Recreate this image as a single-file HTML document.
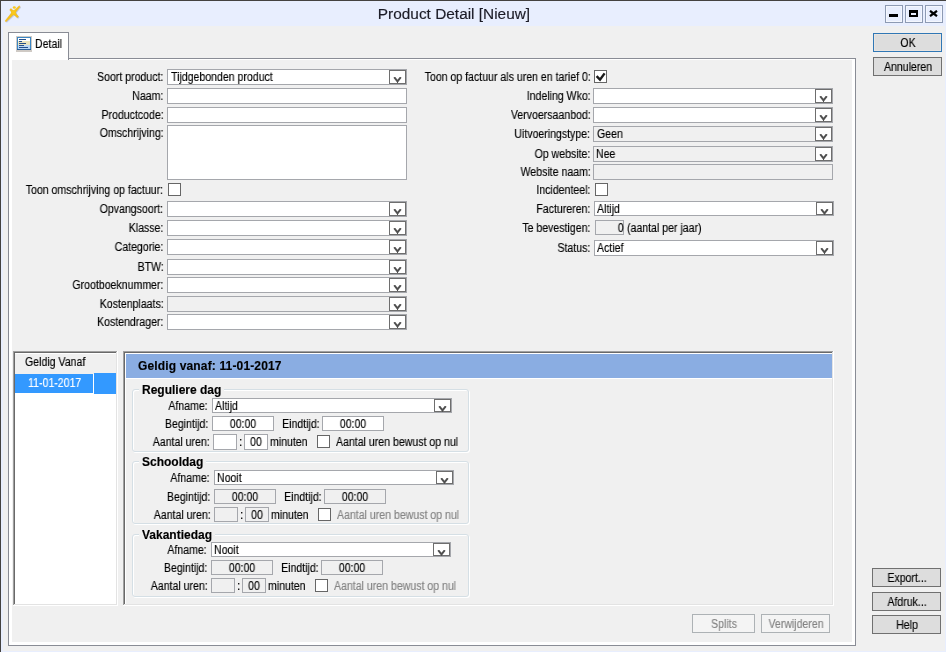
<!DOCTYPE html>
<html><head><meta charset="utf-8"><title>Product Detail</title>
<style>
html,body{margin:0;padding:0;}
body{width:946px;height:652px;overflow:hidden;position:relative;background:#f0f0f0;font-family:'Liberation Sans', sans-serif;}
body>div{position:absolute;}
.t{white-space:nowrap;font-family:'Liberation Sans', sans-serif;will-change:transform;-webkit-text-stroke:0.15px currentColor;}
</style></head><body>
<div style="left:0px;top:0px;width:946px;height:652px;background:#e8eefe"></div>
<div style="left:0px;top:0px;width:946px;height:1px;background:#444240"></div>
<div style="left:0px;top:0px;width:1px;height:652px;background:#444240"></div>
<div style="left:3px;top:26px;width:942px;height:625px;background:#f0f0f0"></div>
<svg width="24" height="24" style="position:absolute;left:0px;top:0px" viewBox="0 0 24 24">
<g fill="#7d8aa8" opacity="0.35" transform="translate(0.9,0.9)"><path d="M14.61 13.57 L20.17 6.65 L19.23 5.75 L12.59 11.63 Z M14.53 11.69 L10.95 8.57 L9.65 9.83 L12.67 13.51 Z M12.58 13.56 L17.28 17.78 L18.52 16.62 L14.62 11.64 Z M12.50 11.58 L5.02 20.96 L5.98 21.84 L14.70 13.62 Z"/><circle cx="13.6" cy="12.6" r="2.3"/></g>
<g fill="#f6c21a" stroke="#e9a90c" stroke-width="0.35" stroke-linejoin="round"><path d="M14.61 13.57 L20.17 6.65 L19.23 5.75 L12.59 11.63 Z M14.53 11.69 L10.95 8.57 L9.65 9.83 L12.67 13.51 Z M12.58 13.56 L17.28 17.78 L18.52 16.62 L14.62 11.64 Z M12.50 11.58 L5.02 20.96 L5.98 21.84 L14.70 13.62 Z"/></g>
<g fill="#f9c81e"><circle cx="13.6" cy="12.6" r="2.3"/><ellipse cx="14.3" cy="7.5" rx="1.55" ry="1.3"/></g>
</svg>
<div class="t" style="left:301px;width:306px;top:5px;text-align:center;font-size:15.4px;line-height:18px;color:#1b1b26">Product Detail [Nieuw]</div>
<div style="left:885px;top:5px;width:18px;height:18px;border:1px solid #8d9ab3;box-shadow:inset 0 0 0 1px #f4f7fe;box-sizing:border-box;background:#e8eefe"></div>
<div style="left:905px;top:5px;width:18px;height:18px;border:1px solid #8d9ab3;box-shadow:inset 0 0 0 1px #f4f7fe;box-sizing:border-box;background:#e8eefe"></div>
<div style="left:925px;top:5px;width:18px;height:18px;border:1px solid #8d9ab3;box-shadow:inset 0 0 0 1px #f4f7fe;box-sizing:border-box;background:#e8eefe"></div>
<div style="left:889px;top:14px;width:9px;height:3px;background:#000"></div>
<div style="left:909px;top:10px;width:9px;height:7px;border:2px solid #000;border-top-width:3px;border-bottom-width:2px;box-sizing:border-box"></div>
<svg width="9" height="7" style="position:absolute;left:929px;top:10px" viewBox="0 0 9 7"><path d="M1 0.8 L8 6.2 M8 0.8 L1 6.2" stroke="#000" stroke-width="2.2"/></svg>
<div style="left:8px;top:58px;width:848px;height:588px;border:1px solid #898c95;box-sizing:border-box;background:#fff"></div>
<div style="left:12px;top:60px;width:840px;height:582px;background:#f0f0f0"></div>
<div style="left:8px;top:32px;width:61px;height:28px;border:1px solid #898c95;border-bottom:none;box-sizing:border-box;background:#fff"></div>
<svg width="16" height="16" style="position:absolute;left:16px;top:36px" viewBox="0 0 16 16" shape-rendering="crispEdges">
<rect x="0" y="0" width="16" height="16" fill="#cfcac5"/>
<rect x="1" y="1" width="14" height="13" fill="#3a86c4"/>
<rect x="1" y="13" width="14" height="1" fill="#2a5e96"/>
<rect x="2" y="2" width="12" height="3" fill="#ffffff"/>
<rect x="2" y="5" width="12" height="4" fill="#e9e4c0"/>
<rect x="2" y="9" width="12" height="4" fill="#b9d7f6"/>
<rect x="3" y="3" width="7" height="1" fill="#244f8a"/>
<rect x="3" y="5" width="3" height="1" fill="#244f8a"/>
<rect x="3" y="7" width="7" height="1" fill="#244f8a"/>
<rect x="3" y="9" width="5" height="1" fill="#244f8a"/>
<rect x="3" y="11" width="9" height="1" fill="#244f8a"/>
</svg>
<div class="t" style="left:35px;top:38px;font-size:12px;line-height:13px;color:#000;transform:scaleX(0.88);transform-origin:0 0;">Detail</div>
<div class="t" style="right:782.5px;top:71px;font-size:12px;line-height:13px;color:#000;transform:scaleX(0.88);transform-origin:100% 0;text-align:right;">Soort product:</div>
<div style="left:167px;top:69px;width:240px;height:16px;background:#fff;border:1px solid #a5a7ac;box-sizing:border-box"></div>
<div style="left:389px;top:70px;width:17px;height:14px;background:#fff;border:1px solid #6e6e6e;box-sizing:border-box"></div>
<svg width="9" height="7" style="position:absolute;left:393px;top:77px" viewBox="0 0 9 7"><path d="M1.2 0.2 L4.5 4.3 L7.8 0.2" fill="none" stroke="#505050" stroke-width="2"/><path d="M4.5 4 L4.5 6" stroke="#505050" stroke-width="1"/></svg>
<div class="t" style="left:171px;top:71px;font-size:12px;line-height:13px;color:#000;transform:scaleX(0.88);transform-origin:0 0;">Tijdgebonden product</div>
<div class="t" style="right:782.5px;top:90px;font-size:12px;line-height:13px;color:#000;transform:scaleX(0.88);transform-origin:100% 0;text-align:right;">Naam:</div>
<div style="left:167px;top:88px;width:240px;height:16px;background:#fff;border:1px solid #a5a7ac;box-sizing:border-box"></div>
<div class="t" style="right:782.5px;top:109px;font-size:12px;line-height:13px;color:#000;transform:scaleX(0.88);transform-origin:100% 0;text-align:right;">Productcode:</div>
<div style="left:167px;top:107px;width:240px;height:16px;background:#fff;border:1px solid #a5a7ac;box-sizing:border-box"></div>
<div class="t" style="right:782.5px;top:127px;font-size:12px;line-height:13px;color:#000;transform:scaleX(0.88);transform-origin:100% 0;text-align:right;">Omschrijving:</div>
<div style="left:167px;top:125px;width:240px;height:55px;background:#fff;border:1px solid #a5a7ac;box-sizing:border-box"></div>
<div class="t" style="right:782.5px;top:184px;font-size:12px;line-height:13px;color:#000;transform:scaleX(0.88);transform-origin:100% 0;text-align:right;">Toon omschrijving op factuur:</div>
<div style="left:168px;top:183px;width:13px;height:13px;background:#fff;border:1px solid #666;box-sizing:border-box"></div>
<div class="t" style="right:782.5px;top:203px;font-size:12px;line-height:13px;color:#000;transform:scaleX(0.88);transform-origin:100% 0;text-align:right;">Opvangsoort:</div>
<div style="left:167px;top:201px;width:240px;height:16px;background:#fff;border:1px solid #a5a7ac;box-sizing:border-box"></div>
<div style="left:389px;top:202px;width:17px;height:14px;background:#fff;border:1px solid #6e6e6e;box-sizing:border-box"></div>
<svg width="9" height="7" style="position:absolute;left:393px;top:209px" viewBox="0 0 9 7"><path d="M1.2 0.2 L4.5 4.3 L7.8 0.2" fill="none" stroke="#505050" stroke-width="2"/><path d="M4.5 4 L4.5 6" stroke="#505050" stroke-width="1"/></svg>
<div class="t" style="right:782.5px;top:222px;font-size:12px;line-height:13px;color:#000;transform:scaleX(0.88);transform-origin:100% 0;text-align:right;">Klasse:</div>
<div style="left:167px;top:220px;width:240px;height:16px;background:#fff;border:1px solid #a5a7ac;box-sizing:border-box"></div>
<div style="left:389px;top:221px;width:17px;height:14px;background:#fff;border:1px solid #6e6e6e;box-sizing:border-box"></div>
<svg width="9" height="7" style="position:absolute;left:393px;top:228px" viewBox="0 0 9 7"><path d="M1.2 0.2 L4.5 4.3 L7.8 0.2" fill="none" stroke="#505050" stroke-width="2"/><path d="M4.5 4 L4.5 6" stroke="#505050" stroke-width="1"/></svg>
<div class="t" style="right:782.5px;top:241px;font-size:12px;line-height:13px;color:#000;transform:scaleX(0.88);transform-origin:100% 0;text-align:right;">Categorie:</div>
<div style="left:167px;top:239px;width:240px;height:16px;background:#fff;border:1px solid #a5a7ac;box-sizing:border-box"></div>
<div style="left:389px;top:240px;width:17px;height:14px;background:#fff;border:1px solid #6e6e6e;box-sizing:border-box"></div>
<svg width="9" height="7" style="position:absolute;left:393px;top:247px" viewBox="0 0 9 7"><path d="M1.2 0.2 L4.5 4.3 L7.8 0.2" fill="none" stroke="#505050" stroke-width="2"/><path d="M4.5 4 L4.5 6" stroke="#505050" stroke-width="1"/></svg>
<div class="t" style="right:782.5px;top:261px;font-size:12px;line-height:13px;color:#000;transform:scaleX(0.88);transform-origin:100% 0;text-align:right;">BTW:</div>
<div style="left:167px;top:259px;width:240px;height:16px;background:#fff;border:1px solid #a5a7ac;box-sizing:border-box"></div>
<div style="left:389px;top:260px;width:17px;height:14px;background:#fff;border:1px solid #6e6e6e;box-sizing:border-box"></div>
<svg width="9" height="7" style="position:absolute;left:393px;top:267px" viewBox="0 0 9 7"><path d="M1.2 0.2 L4.5 4.3 L7.8 0.2" fill="none" stroke="#505050" stroke-width="2"/><path d="M4.5 4 L4.5 6" stroke="#505050" stroke-width="1"/></svg>
<div class="t" style="right:782.5px;top:279px;font-size:12px;line-height:13px;color:#000;transform:scaleX(0.88);transform-origin:100% 0;text-align:right;">Grootboeknummer:</div>
<div style="left:167px;top:277px;width:240px;height:16px;background:#fff;border:1px solid #a5a7ac;box-sizing:border-box"></div>
<div style="left:389px;top:278px;width:17px;height:14px;background:#fff;border:1px solid #6e6e6e;box-sizing:border-box"></div>
<svg width="9" height="7" style="position:absolute;left:393px;top:285px" viewBox="0 0 9 7"><path d="M1.2 0.2 L4.5 4.3 L7.8 0.2" fill="none" stroke="#505050" stroke-width="2"/><path d="M4.5 4 L4.5 6" stroke="#505050" stroke-width="1"/></svg>
<div class="t" style="right:782.5px;top:298px;font-size:12px;line-height:13px;color:#000;transform:scaleX(0.88);transform-origin:100% 0;text-align:right;">Kostenplaats:</div>
<div style="left:167px;top:296px;width:240px;height:16px;background:#f0f0f0;border:1px solid #a5a7ac;box-sizing:border-box"></div>
<div style="left:389px;top:297px;width:17px;height:14px;background:#fff;border:1px solid #6e6e6e;box-sizing:border-box"></div>
<svg width="9" height="7" style="position:absolute;left:393px;top:304px" viewBox="0 0 9 7"><path d="M1.2 0.2 L4.5 4.3 L7.8 0.2" fill="none" stroke="#505050" stroke-width="2"/><path d="M4.5 4 L4.5 6" stroke="#505050" stroke-width="1"/></svg>
<div class="t" style="right:782.5px;top:316px;font-size:12px;line-height:13px;color:#000;transform:scaleX(0.88);transform-origin:100% 0;text-align:right;">Kostendrager:</div>
<div style="left:167px;top:314px;width:240px;height:16px;background:#fff;border:1px solid #a5a7ac;box-sizing:border-box"></div>
<div style="left:389px;top:315px;width:17px;height:14px;background:#fff;border:1px solid #6e6e6e;box-sizing:border-box"></div>
<svg width="9" height="7" style="position:absolute;left:393px;top:322px" viewBox="0 0 9 7"><path d="M1.2 0.2 L4.5 4.3 L7.8 0.2" fill="none" stroke="#505050" stroke-width="2"/><path d="M4.5 4 L4.5 6" stroke="#505050" stroke-width="1"/></svg>
<div class="t" style="right:355.5px;top:71px;font-size:12px;line-height:13px;color:#000;transform:scaleX(0.88);transform-origin:100% 0;text-align:right;">Toon op factuur als uren en tarief 0:</div>
<div style="left:594px;top:70px;width:13px;height:13px;background:#fff;border:1px solid #666;box-sizing:border-box"></div>
<svg width="13" height="13" style="position:absolute;left:594px;top:70px" viewBox="0 0 13 13"><path d="M2.6 6.2 L6 9.6 L10.6 3.4" fill="none" stroke="#1a1a1a" stroke-width="2.4"/></svg>
<div class="t" style="right:355.5px;top:90px;font-size:12px;line-height:13px;color:#000;transform:scaleX(0.88);transform-origin:100% 0;text-align:right;">Indeling Wko:</div>
<div style="left:593px;top:88px;width:240px;height:16px;background:#fff;border:1px solid #a5a7ac;box-sizing:border-box"></div>
<div style="left:815px;top:89px;width:17px;height:14px;background:#fff;border:1px solid #6e6e6e;box-sizing:border-box"></div>
<svg width="9" height="7" style="position:absolute;left:819px;top:96px" viewBox="0 0 9 7"><path d="M1.2 0.2 L4.5 4.3 L7.8 0.2" fill="none" stroke="#505050" stroke-width="2"/><path d="M4.5 4 L4.5 6" stroke="#505050" stroke-width="1"/></svg>
<div class="t" style="right:355.5px;top:109px;font-size:12px;line-height:13px;color:#000;transform:scaleX(0.88);transform-origin:100% 0;text-align:right;">Vervoersaanbod:</div>
<div style="left:593px;top:107px;width:240px;height:16px;background:#fff;border:1px solid #a5a7ac;box-sizing:border-box"></div>
<div style="left:815px;top:108px;width:17px;height:14px;background:#fff;border:1px solid #6e6e6e;box-sizing:border-box"></div>
<svg width="9" height="7" style="position:absolute;left:819px;top:115px" viewBox="0 0 9 7"><path d="M1.2 0.2 L4.5 4.3 L7.8 0.2" fill="none" stroke="#505050" stroke-width="2"/><path d="M4.5 4 L4.5 6" stroke="#505050" stroke-width="1"/></svg>
<div class="t" style="right:355.5px;top:128px;font-size:12px;line-height:13px;color:#000;transform:scaleX(0.88);transform-origin:100% 0;text-align:right;">Uitvoeringstype:</div>
<div style="left:593px;top:126px;width:240px;height:16px;background:#f0f0f0;border:1px solid #a5a7ac;box-sizing:border-box"></div>
<div style="left:815px;top:127px;width:17px;height:14px;background:#fff;border:1px solid #6e6e6e;box-sizing:border-box"></div>
<svg width="9" height="7" style="position:absolute;left:819px;top:134px" viewBox="0 0 9 7"><path d="M1.2 0.2 L4.5 4.3 L7.8 0.2" fill="none" stroke="#505050" stroke-width="2"/><path d="M4.5 4 L4.5 6" stroke="#505050" stroke-width="1"/></svg>
<div class="t" style="left:597px;top:128px;font-size:12px;line-height:13px;color:#000;transform:scaleX(0.88);transform-origin:0 0;">Geen</div>
<div class="t" style="right:355.5px;top:148px;font-size:12px;line-height:13px;color:#000;transform:scaleX(0.88);transform-origin:100% 0;text-align:right;">Op website:</div>
<div style="left:593px;top:146px;width:240px;height:16px;background:#f0f0f0;border:1px solid #a5a7ac;box-sizing:border-box"></div>
<div style="left:815px;top:147px;width:17px;height:14px;background:#fff;border:1px solid #6e6e6e;box-sizing:border-box"></div>
<svg width="9" height="7" style="position:absolute;left:819px;top:154px" viewBox="0 0 9 7"><path d="M1.2 0.2 L4.5 4.3 L7.8 0.2" fill="none" stroke="#505050" stroke-width="2"/><path d="M4.5 4 L4.5 6" stroke="#505050" stroke-width="1"/></svg>
<div class="t" style="left:596px;top:148px;font-size:12px;line-height:13px;color:#000;transform:scaleX(0.88);transform-origin:0 0;">Nee</div>
<div class="t" style="right:355.5px;top:166px;font-size:12px;line-height:13px;color:#000;transform:scaleX(0.88);transform-origin:100% 0;text-align:right;">Website naam:</div>
<div style="left:593px;top:164px;width:240px;height:16px;background:#f0f0f0;border:1px solid #a5a7ac;box-sizing:border-box"></div>
<div class="t" style="right:355.5px;top:184px;font-size:12px;line-height:13px;color:#000;transform:scaleX(0.88);transform-origin:100% 0;text-align:right;">Incidenteel:</div>
<div style="left:595px;top:183px;width:13px;height:13px;background:#fff;border:1px solid #666;box-sizing:border-box"></div>
<div class="t" style="right:355.5px;top:203px;font-size:12px;line-height:13px;color:#000;transform:scaleX(0.88);transform-origin:100% 0;text-align:right;">Factureren:</div>
<div style="left:594px;top:201px;width:240px;height:15px;background:#fff;border:1px solid #a5a7ac;box-sizing:border-box"></div>
<div style="left:816px;top:202px;width:17px;height:13px;background:#fff;border:1px solid #6e6e6e;box-sizing:border-box"></div>
<svg width="9" height="7" style="position:absolute;left:820px;top:209px" viewBox="0 0 9 7"><path d="M1.2 0.2 L4.5 4.3 L7.8 0.2" fill="none" stroke="#505050" stroke-width="2"/><path d="M4.5 4 L4.5 6" stroke="#505050" stroke-width="1"/></svg>
<div class="t" style="left:597px;top:203px;font-size:12px;line-height:13px;color:#000;transform:scaleX(0.88);transform-origin:0 0;">Altijd</div>
<div class="t" style="right:355.5px;top:222px;font-size:12px;line-height:13px;color:#000;transform:scaleX(0.88);transform-origin:100% 0;text-align:right;">Te bevestigen:</div>
<div style="left:595px;top:220px;width:29px;height:15px;background:#f0f0f0;border:1px solid #a5a7ac;box-sizing:border-box"></div>
<div class="t" style="right:322px;top:222px;font-size:12px;line-height:13px;color:#000;transform:scaleX(0.88);transform-origin:100% 0;text-align:right;">0</div>
<div class="t" style="left:627px;top:222px;font-size:12px;line-height:13px;color:#000;transform:scaleX(0.88);transform-origin:0 0;">(aantal per jaar)</div>
<div class="t" style="right:355.5px;top:242px;font-size:12px;line-height:13px;color:#000;transform:scaleX(0.88);transform-origin:100% 0;text-align:right;">Status:</div>
<div style="left:594px;top:240px;width:240px;height:16px;background:#fff;border:1px solid #a5a7ac;box-sizing:border-box"></div>
<div style="left:816px;top:241px;width:17px;height:14px;background:#fff;border:1px solid #6e6e6e;box-sizing:border-box"></div>
<svg width="9" height="7" style="position:absolute;left:820px;top:248px" viewBox="0 0 9 7"><path d="M1.2 0.2 L4.5 4.3 L7.8 0.2" fill="none" stroke="#505050" stroke-width="2"/><path d="M4.5 4 L4.5 6" stroke="#505050" stroke-width="1"/></svg>
<div class="t" style="left:597px;top:242px;font-size:12px;line-height:13px;color:#000;transform:scaleX(0.88);transform-origin:0 0;">Actief</div>
<div style="left:13px;top:351px;width:105px;height:255px;background:#ffffff"></div>
<div style="left:13px;top:351px;width:104px;height:254px;background:#a0a0a0"></div>
<div style="left:14px;top:352px;width:103px;height:253px;background:#e3e3e3"></div>
<div style="left:14px;top:352px;width:102px;height:252px;background:#696969"></div>
<div style="left:15px;top:353px;width:101px;height:251px;background:#ffffff"></div>
<div style="left:15px;top:353px;width:101px;height:21px;background:#f0f0f0"></div>
<div style="left:15px;top:353px;width:101px;height:1px;background:#ffffff"></div>
<div class="t" style="left:25px;top:356px;font-size:12px;line-height:13px;color:#000;transform:scaleX(0.88);transform-origin:0 0;">Geldig Vanaf</div>
<div style="left:15px;top:374px;width:78px;height:19px;background:#3399ff"></div>
<div style="left:94px;top:373px;width:22px;height:21px;background:#3399ff"></div>
<div class="t" style="left:28px;top:377px;font-size:12px;line-height:13px;color:#fff;transform:scaleX(0.88);transform-origin:0 0;">11-01-2017</div>
<div style="left:123px;top:351px;width:711px;height:255px;background:#ffffff"></div>
<div style="left:123px;top:351px;width:710px;height:254px;background:#a0a0a0"></div>
<div style="left:124px;top:352px;width:709px;height:253px;background:#e3e3e3"></div>
<div style="left:124px;top:352px;width:708px;height:252px;background:#696969"></div>
<div style="left:125px;top:353px;width:707px;height:251px;background:#f0f0f0"></div>
<div style="left:125px;top:353px;width:707px;height:1px;background:#ffffff"></div>
<div style="left:125px;top:353px;width:1px;height:251px;background:#ffffff"></div>
<div style="left:126px;top:354px;width:706px;height:24px;background:#8aade2"></div>
<div style="left:126px;top:378px;width:706px;height:1px;background:#ffffff"></div>
<div class="t" style="left:138px;top:360px;font-size:12px;line-height:13px;color:#000;font-weight:bold;transform:scaleX(1.0);transform-origin:0 0;letter-spacing:0.15px">Geldig vanaf: 11-01-2017</div>
<div style="left:132px;top:389px;width:337px;height:63px;border:1px solid #d5dfe5;border-radius:3px;box-sizing:border-box;box-shadow:inset 1px 1px 0 #fff, 1px 1px 0 #fff"></div>
<div class="t" style="left:139px;top:384px;font-size:12px;line-height:13px;font-weight:bold;background:#f0f0f0;padding:0 3px;">Reguliere dag</div>
<div class="t" style="right:738px;top:400px;font-size:12px;line-height:13px;color:#000;transform:scaleX(0.88);transform-origin:100% 0;text-align:right;">Afname:</div>
<div style="left:212px;top:398px;width:240px;height:15px;background:#fff;border:1px solid #a5a7ac;box-sizing:border-box"></div>
<div style="left:434px;top:399px;width:17px;height:13px;background:#fff;border:1px solid #6e6e6e;box-sizing:border-box"></div>
<svg width="9" height="7" style="position:absolute;left:438px;top:406px" viewBox="0 0 9 7"><path d="M1.2 0.2 L4.5 4.3 L7.8 0.2" fill="none" stroke="#505050" stroke-width="2"/><path d="M4.5 4 L4.5 6" stroke="#505050" stroke-width="1"/></svg>
<div class="t" style="left:215px;top:400px;font-size:12px;line-height:13px;color:#000;transform:scaleX(0.88);transform-origin:0 0;">Altijd</div>
<div class="t" style="right:738px;top:418px;font-size:12px;line-height:13px;color:#000;transform:scaleX(0.88);transform-origin:100% 0;text-align:right;">Begintijd:</div>
<div style="left:212px;top:416px;width:62px;height:15px;background:#fff;border:1px solid #a5a7ac;box-sizing:border-box"></div>
<div class="t" style="left:43.0px;width:400px;top:418px;font-size:12px;line-height:13px;color:#000;transform:scaleX(0.88);transform-origin:50% 0;text-align:center;">00:00</div>
<div class="t" style="right:626.5px;top:418px;font-size:12px;line-height:13px;color:#000;transform:scaleX(0.88);transform-origin:100% 0;text-align:right;">Eindtijd:</div>
<div style="left:322px;top:416px;width:62px;height:15px;background:#fff;border:1px solid #a5a7ac;box-sizing:border-box"></div>
<div class="t" style="left:153.0px;width:400px;top:418px;font-size:12px;line-height:13px;color:#000;transform:scaleX(0.88);transform-origin:50% 0;text-align:center;">00:00</div>
<div class="t" style="right:736px;top:436px;font-size:12px;line-height:13px;color:#000;transform:scaleX(0.88);transform-origin:100% 0;text-align:right;">Aantal uren:</div>
<div style="left:213px;top:434px;width:24px;height:16px;background:#fff;border:1px solid #a5a7ac;box-sizing:border-box"></div>
<div class="t" style="left:239px;top:436px;font-size:12px;line-height:13px;color:#000;transform:scaleX(0.88);transform-origin:0 0;">:</div>
<div style="left:244px;top:434px;width:24px;height:16px;background:#fff;border:1px solid #a5a7ac;box-sizing:border-box"></div>
<div class="t" style="left:56.0px;width:400px;top:436px;font-size:12px;line-height:13px;color:#000;transform:scaleX(0.88);transform-origin:50% 0;text-align:center;">00</div>
<div class="t" style="left:270px;top:436px;font-size:12px;line-height:13px;color:#000;transform:scaleX(0.88);transform-origin:0 0;">minuten</div>
<div style="left:317px;top:435px;width:13px;height:13px;background:#fff;border:1px solid #666;box-sizing:border-box"></div>
<div class="t" style="left:336px;top:436px;font-size:12px;line-height:13px;color:#000;transform:scaleX(0.88);transform-origin:0 0;">Aantal uren bewust op nul</div>
<div style="left:132px;top:461px;width:337px;height:63px;border:1px solid #d5dfe5;border-radius:3px;box-sizing:border-box;box-shadow:inset 1px 1px 0 #fff, 1px 1px 0 #fff"></div>
<div class="t" style="left:139px;top:456px;font-size:12px;line-height:13px;font-weight:bold;background:#f0f0f0;padding:0 3px;">Schooldag</div>
<div class="t" style="right:736px;top:472px;font-size:12px;line-height:13px;color:#000;transform:scaleX(0.88);transform-origin:100% 0;text-align:right;">Afname:</div>
<div style="left:214px;top:470px;width:240px;height:15px;background:#fff;border:1px solid #a5a7ac;box-sizing:border-box"></div>
<div style="left:436px;top:471px;width:17px;height:13px;background:#fff;border:1px solid #6e6e6e;box-sizing:border-box"></div>
<svg width="9" height="7" style="position:absolute;left:440px;top:478px" viewBox="0 0 9 7"><path d="M1.2 0.2 L4.5 4.3 L7.8 0.2" fill="none" stroke="#505050" stroke-width="2"/><path d="M4.5 4 L4.5 6" stroke="#505050" stroke-width="1"/></svg>
<div class="t" style="left:217px;top:472px;font-size:12px;line-height:13px;color:#000;transform:scaleX(0.88);transform-origin:0 0;">Nooit</div>
<div class="t" style="right:736px;top:491px;font-size:12px;line-height:13px;color:#000;transform:scaleX(0.88);transform-origin:100% 0;text-align:right;">Begintijd:</div>
<div style="left:214px;top:489px;width:62px;height:15px;background:#f0f0f0;border:1px solid #a5a7ac;box-sizing:border-box"></div>
<div class="t" style="left:45.0px;width:400px;top:491px;font-size:12px;line-height:13px;color:#000;transform:scaleX(0.88);transform-origin:50% 0;text-align:center;">00:00</div>
<div class="t" style="right:624.5px;top:491px;font-size:12px;line-height:13px;color:#000;transform:scaleX(0.88);transform-origin:100% 0;text-align:right;">Eindtijd:</div>
<div style="left:324px;top:489px;width:62px;height:15px;background:#f0f0f0;border:1px solid #a5a7ac;box-sizing:border-box"></div>
<div class="t" style="left:155.0px;width:400px;top:491px;font-size:12px;line-height:13px;color:#000;transform:scaleX(0.88);transform-origin:50% 0;text-align:center;">00:00</div>
<div class="t" style="right:735px;top:509px;font-size:12px;line-height:13px;color:#000;transform:scaleX(0.88);transform-origin:100% 0;text-align:right;">Aantal uren:</div>
<div style="left:214px;top:507px;width:24px;height:15px;background:#f0f0f0;border:1px solid #a5a7ac;box-sizing:border-box"></div>
<div class="t" style="left:240px;top:509px;font-size:12px;line-height:13px;color:#000;transform:scaleX(0.88);transform-origin:0 0;">:</div>
<div style="left:245px;top:507px;width:24px;height:15px;background:#f0f0f0;border:1px solid #a5a7ac;box-sizing:border-box"></div>
<div class="t" style="left:57.0px;width:400px;top:509px;font-size:12px;line-height:13px;color:#000;transform:scaleX(0.88);transform-origin:50% 0;text-align:center;">00</div>
<div class="t" style="left:271px;top:509px;font-size:12px;line-height:13px;color:#000;transform:scaleX(0.88);transform-origin:0 0;">minuten</div>
<div style="left:318px;top:508px;width:13px;height:13px;background:#fff;border:1px solid #666;box-sizing:border-box"></div>
<div class="t" style="left:337px;top:509px;font-size:12px;line-height:13px;color:#838383;transform:scaleX(0.88);transform-origin:0 0;">Aantal uren bewust op nul</div>
<div style="left:132px;top:534px;width:337px;height:63px;border:1px solid #d5dfe5;border-radius:3px;box-sizing:border-box;box-shadow:inset 1px 1px 0 #fff, 1px 1px 0 #fff"></div>
<div class="t" style="left:139px;top:529px;font-size:12px;line-height:13px;font-weight:bold;background:#f0f0f0;padding:0 3px;">Vakantiedag</div>
<div class="t" style="right:739px;top:544px;font-size:12px;line-height:13px;color:#000;transform:scaleX(0.88);transform-origin:100% 0;text-align:right;">Afname:</div>
<div style="left:211px;top:542px;width:240px;height:15px;background:#fff;border:1px solid #a5a7ac;box-sizing:border-box"></div>
<div style="left:433px;top:543px;width:17px;height:13px;background:#fff;border:1px solid #6e6e6e;box-sizing:border-box"></div>
<svg width="9" height="7" style="position:absolute;left:437px;top:550px" viewBox="0 0 9 7"><path d="M1.2 0.2 L4.5 4.3 L7.8 0.2" fill="none" stroke="#505050" stroke-width="2"/><path d="M4.5 4 L4.5 6" stroke="#505050" stroke-width="1"/></svg>
<div class="t" style="left:214px;top:544px;font-size:12px;line-height:13px;color:#000;transform:scaleX(0.88);transform-origin:0 0;">Nooit</div>
<div class="t" style="right:739px;top:562px;font-size:12px;line-height:13px;color:#000;transform:scaleX(0.88);transform-origin:100% 0;text-align:right;">Begintijd:</div>
<div style="left:211px;top:560px;width:62px;height:15px;background:#f0f0f0;border:1px solid #a5a7ac;box-sizing:border-box"></div>
<div class="t" style="left:42.0px;width:400px;top:562px;font-size:12px;line-height:13px;color:#000;transform:scaleX(0.88);transform-origin:50% 0;text-align:center;">00:00</div>
<div class="t" style="right:627.5px;top:562px;font-size:12px;line-height:13px;color:#000;transform:scaleX(0.88);transform-origin:100% 0;text-align:right;">Eindtijd:</div>
<div style="left:321px;top:560px;width:62px;height:15px;background:#f0f0f0;border:1px solid #a5a7ac;box-sizing:border-box"></div>
<div class="t" style="left:152.0px;width:400px;top:562px;font-size:12px;line-height:13px;color:#000;transform:scaleX(0.88);transform-origin:50% 0;text-align:center;">00:00</div>
<div class="t" style="right:738px;top:580px;font-size:12px;line-height:13px;color:#000;transform:scaleX(0.88);transform-origin:100% 0;text-align:right;">Aantal uren:</div>
<div style="left:211px;top:578px;width:24px;height:15px;background:#f0f0f0;border:1px solid #a5a7ac;box-sizing:border-box"></div>
<div class="t" style="left:237px;top:580px;font-size:12px;line-height:13px;color:#000;transform:scaleX(0.88);transform-origin:0 0;">:</div>
<div style="left:242px;top:578px;width:24px;height:15px;background:#f0f0f0;border:1px solid #a5a7ac;box-sizing:border-box"></div>
<div class="t" style="left:54.0px;width:400px;top:580px;font-size:12px;line-height:13px;color:#000;transform:scaleX(0.88);transform-origin:50% 0;text-align:center;">00</div>
<div class="t" style="left:268px;top:580px;font-size:12px;line-height:13px;color:#000;transform:scaleX(0.88);transform-origin:0 0;">minuten</div>
<div style="left:315px;top:579px;width:13px;height:13px;background:#fff;border:1px solid #666;box-sizing:border-box"></div>
<div class="t" style="left:334px;top:580px;font-size:12px;line-height:13px;color:#838383;transform:scaleX(0.88);transform-origin:0 0;">Aantal uren bewust op nul</div>
<div style="left:692px;top:614px;width:63px;height:19px;background:#f4f4f4;border:1px solid #adb2b5;box-sizing:border-box"></div>
<div class="t" style="left:523.5px;width:400px;top:618px;font-size:12px;line-height:13px;color:#838383;transform:scaleX(0.88);transform-origin:50% 0;text-align:center;">Splits</div>
<div style="left:761px;top:614px;width:69px;height:19px;background:#f4f4f4;border:1px solid #adb2b5;box-sizing:border-box"></div>
<div class="t" style="left:595.5px;width:400px;top:618px;font-size:12px;line-height:13px;color:#838383;transform:scaleX(0.88);transform-origin:50% 0;text-align:center;">Verwijderen</div>
<div style="left:873px;top:33px;width:69px;height:19px;background:#dddddd;border:1px solid #3077b5;box-shadow:inset 0 0 0 1px #e8e4e0;box-sizing:border-box"></div>
<div class="t" style="left:707.5px;width:400px;top:37px;font-size:12px;line-height:13px;color:#000;transform:scaleX(0.88);transform-origin:50% 0;text-align:center;">OK</div>
<div style="left:873px;top:57px;width:69px;height:19px;background:#dddddd;border:1px solid #707070;box-sizing:border-box"></div>
<div class="t" style="left:707.5px;width:400px;top:61px;font-size:12px;line-height:13px;color:#000;transform:scaleX(0.88);transform-origin:50% 0;text-align:center;">Annuleren</div>
<div style="left:872px;top:568px;width:69px;height:19px;background:#dddddd;border:1px solid #707070;box-sizing:border-box"></div>
<div class="t" style="left:706.5px;width:400px;top:572px;font-size:12px;line-height:13px;color:#000;transform:scaleX(0.88);transform-origin:50% 0;text-align:center;">Export...</div>
<div style="left:872px;top:592px;width:69px;height:19px;background:#dddddd;border:1px solid #707070;box-sizing:border-box"></div>
<div class="t" style="left:706.5px;width:400px;top:596px;font-size:12px;line-height:13px;color:#000;transform:scaleX(0.88);transform-origin:50% 0;text-align:center;">Afdruk...</div>
<div style="left:872px;top:615px;width:69px;height:19px;background:#dddddd;border:1px solid #707070;box-sizing:border-box"></div>
<div class="t" style="left:706.5px;width:400px;top:619px;font-size:12px;line-height:13px;color:#000;transform:scaleX(0.88);transform-origin:50% 0;text-align:center;">Help</div>
</body></html>
